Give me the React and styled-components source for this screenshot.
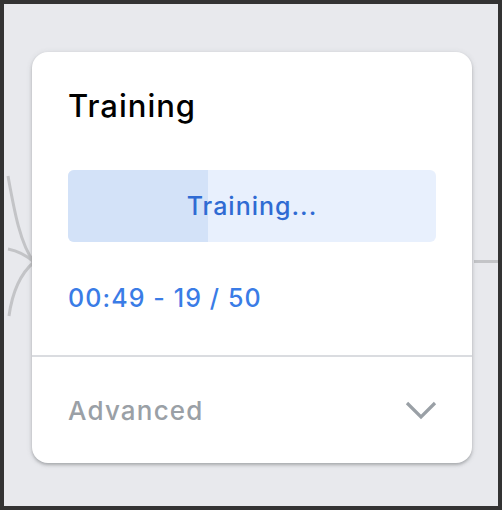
import React from 'react';
import styled, { createGlobalStyle } from 'styled-components';

const GlobalStyle = createGlobalStyle`
  html, body {
    margin: 0;
    padding: 0;
    background: #333333;
  }
  * { box-sizing: border-box; }
`;

const Frame = styled.div`
  position: relative;
  width: 502px;
  height: 510px;
  border: 4px solid #333333;
  background: #e8e9ed;
  padding: 48px 0 0 28px;
  font-family: Inter, "Open Sans", "Liberation Sans", sans-serif;
  overflow: hidden;
`;

const Edges = styled.svg`
  position: absolute;
  left: 0;
  top: 0;
  pointer-events: none;
`;

const Card = styled.div`
  position: relative;
  width: 440px;
  height: 411px;
  background: #ffffff;
  border-radius: 16px;
  box-shadow: 0 2px 3px rgba(60, 64, 67, 0.3), 0 1px 6px rgba(60, 64, 67, 0.12);
  display: flex;
  flex-direction: column;
`;

const Body = styled.div`
  padding: 36px 36px 0 36px;
  display: flex;
  flex-direction: column;
  height: 303px;
`;

const Title = styled.h2`
  margin: 0;
  font-size: 31px;
  line-height: 36px;
  font-weight: 500;
  letter-spacing: 1px;
  color: #000000;
`;

const Progress = styled.div`
  position: relative;
  margin-top: 46px;
  height: 72px;
  border-radius: 6px;
  background: #e8f0fd;
  overflow: hidden;
  display: flex;
  align-items: center;
  justify-content: center;
`;

const Fill = styled.div`
  position: absolute;
  left: 0;
  top: 0;
  bottom: 0;
  background: #d3e2f8;
`;

const ProgressLabel = styled.span`
  position: relative;
  font-size: 25px;
  font-weight: 500;
  letter-spacing: 1px;
  color: #2f6bd3;
`;

const Status = styled.div`
  margin-top: 41px;
  font-size: 25px;
  font-weight: 500;
  letter-spacing: 1.1px;
  color: #3a7ce6;
`;

const Divider = styled.hr`
  margin: 0;
  border: none;
  border-top: 2px solid #dadce0;
`;

const Footer = styled.div`
  flex: 1;
  display: flex;
  align-items: center;
  justify-content: space-between;
  padding: 0 34px 0 36px;
`;

const FooterLabel = styled.span`
  font-size: 26px;
  font-weight: 500;
  letter-spacing: 1.2px;
  color: #9aa0a6;
`;

const Chevron = () => (
  <svg width="34" height="22" viewBox="0 0 34 22">
    <path d="M3 4 L17 18 L31 4" fill="none" stroke="#9aa0a6" strokeWidth="3.2" />
  </svg>
);

export default function App() {
  const done = 19;
  const total = 50;
  return (
    <>
      <GlobalStyle />
      <Frame>
        <Edges width="502" height="510">
          <path d="M4 172 C 10 205, 16 240, 30 258" fill="none" stroke="#c3c4c7" strokeWidth="3" />
          <path d="M4 245 C 14 247, 22 251, 30 258" fill="none" stroke="#c3c4c7" strokeWidth="3" />
          <path d="M30 258 C 16 270, 8 290, 5 312" fill="none" stroke="#c3c4c7" strokeWidth="3" />
          <line x1="470" y1="257.5" x2="498" y2="257.5" stroke="#c3c4c7" strokeWidth="3" />
        </Edges>
        <Card>
          <Body>
            <Title>Training</Title>
            <Progress>
              <Fill style={{ width: `${(done / total) * 100}%` }} />
              <ProgressLabel>Training...</ProgressLabel>
            </Progress>
            <Status>00:49 - {done} / {total}</Status>
          </Body>
          <Divider />
          <Footer>
            <FooterLabel>Advanced</FooterLabel>
            <Chevron />
          </Footer>
        </Card>
      </Frame>
    </>
  );
}
